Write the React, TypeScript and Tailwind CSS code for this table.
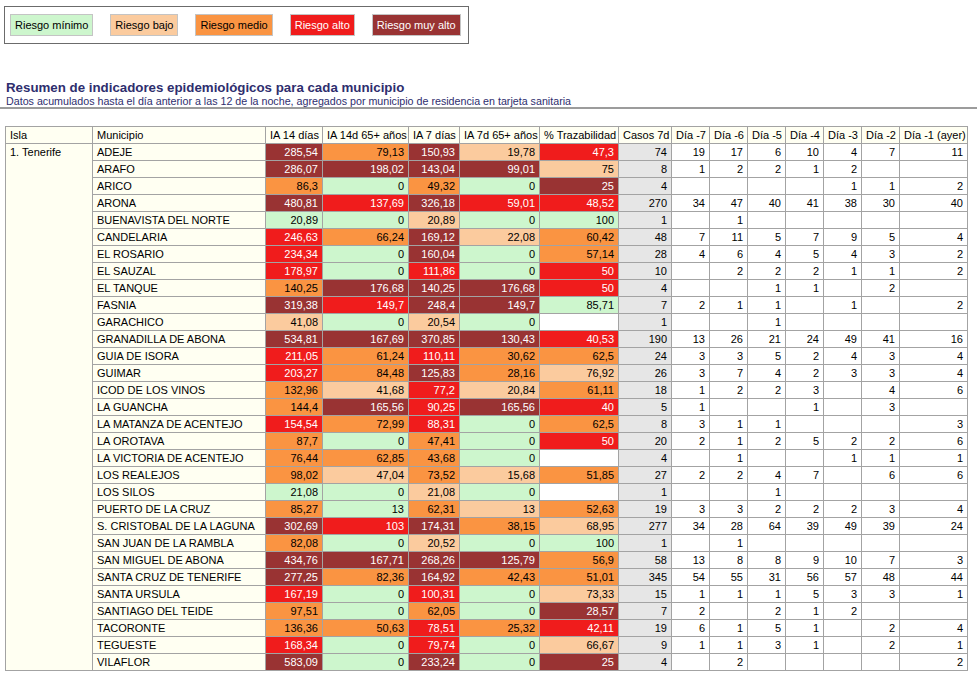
type Lvl = "M" | "A" | "Me" | "B" | "m" | "W";

type Row = {
  name: string;
  vals: [string, Lvl][];
  casos: string;
  days: string[];
};

const lvlClass: Record<Lvl, string> = {
  M: "bg-[#993333] text-white",
  A: "bg-[#f01c1c] text-white",
  Me: "bg-[#fa9442] text-black",
  B: "bg-[#fbcb9e] text-black",
  m: "bg-[#cdf6cd] text-black",
  W: "bg-white text-black",
};

const r = (
  name: string,
  v: [string, Lvl, string, Lvl, string, Lvl, string, Lvl, string, Lvl],
  casos: string,
  days: string[]
): Row => ({
  name,
  vals: [
    [v[0], v[1]],
    [v[2], v[3]],
    [v[4], v[5]],
    [v[6], v[7]],
    [v[8], v[9]],
  ],
  casos,
  days,
});

const rows: Row[] = [
  r("ADEJE", ["285,54", "M", "79,13", "Me", "150,93", "M", "19,78", "B", "47,3", "A"], "74", ["19", "17", "6", "10", "4", "7", "11"]),
  r("ARAFO", ["286,07", "M", "198,02", "M", "143,04", "M", "99,01", "M", "75", "B"], "8", ["1", "2", "2", "1", "2", "", ""]),
  r("ARICO", ["86,3", "Me", "0", "m", "49,32", "Me", "0", "m", "25", "M"], "4", ["", "", "", "", "1", "1", "2"]),
  r("ARONA", ["480,81", "M", "137,69", "A", "326,18", "M", "59,01", "A", "48,52", "A"], "270", ["34", "47", "40", "41", "38", "30", "40"]),
  r("BUENAVISTA DEL NORTE", ["20,89", "m", "0", "m", "20,89", "B", "0", "m", "100", "m"], "1", ["", "1", "", "", "", "", ""]),
  r("CANDELARIA", ["246,63", "A", "66,24", "Me", "169,12", "M", "22,08", "B", "60,42", "Me"], "48", ["7", "11", "5", "7", "9", "5", "4"]),
  r("EL ROSARIO", ["234,34", "A", "0", "m", "160,04", "M", "0", "m", "57,14", "Me"], "28", ["4", "6", "4", "5", "4", "3", "2"]),
  r("EL SAUZAL", ["178,97", "A", "0", "m", "111,86", "A", "0", "m", "50", "A"], "10", ["", "2", "2", "2", "1", "1", "2"]),
  r("EL TANQUE", ["140,25", "Me", "176,68", "M", "140,25", "M", "176,68", "M", "50", "A"], "4", ["", "", "1", "1", "", "2", ""]),
  r("FASNIA", ["319,38", "M", "149,7", "A", "248,4", "M", "149,7", "M", "85,71", "m"], "7", ["2", "1", "1", "", "1", "", "2"]),
  r("GARACHICO", ["41,08", "B", "0", "m", "20,54", "B", "0", "m", "", "W"], "1", ["", "", "1", "", "", "", ""]),
  r("GRANADILLA DE ABONA", ["534,81", "M", "167,69", "M", "370,85", "M", "130,43", "M", "40,53", "A"], "190", ["13", "26", "21", "24", "49", "41", "16"]),
  r("GUIA DE ISORA", ["211,05", "A", "61,24", "Me", "110,11", "A", "30,62", "Me", "62,5", "Me"], "24", ["3", "3", "5", "2", "4", "3", "4"]),
  r("GUIMAR", ["203,27", "A", "84,48", "Me", "125,83", "M", "28,16", "Me", "76,92", "B"], "26", ["3", "7", "4", "2", "3", "3", "4"]),
  r("ICOD DE LOS VINOS", ["132,96", "Me", "41,68", "B", "77,2", "A", "20,84", "B", "61,11", "Me"], "18", ["1", "2", "2", "3", "", "4", "6"]),
  r("LA GUANCHA", ["144,4", "Me", "165,56", "M", "90,25", "A", "165,56", "M", "40", "A"], "5", ["1", "", "", "1", "", "3", ""]),
  r("LA MATANZA DE ACENTEJO", ["154,54", "A", "72,99", "Me", "88,31", "A", "0", "m", "62,5", "Me"], "8", ["3", "1", "1", "", "", "", "3"]),
  r("LA OROTAVA", ["87,7", "Me", "0", "m", "47,41", "Me", "0", "m", "50", "A"], "20", ["2", "1", "2", "5", "2", "2", "6"]),
  r("LA VICTORIA DE ACENTEJO", ["76,44", "Me", "62,85", "Me", "43,68", "Me", "0", "m", "", "W"], "4", ["", "1", "", "", "1", "1", "1"]),
  r("LOS REALEJOS", ["98,02", "Me", "47,04", "B", "73,52", "Me", "15,68", "B", "51,85", "Me"], "27", ["2", "2", "4", "7", "", "6", "6"]),
  r("LOS SILOS", ["21,08", "m", "0", "m", "21,08", "B", "0", "m", "", "W"], "1", ["", "", "1", "", "", "", ""]),
  r("PUERTO DE LA CRUZ", ["85,27", "Me", "13", "m", "62,31", "Me", "13", "B", "52,63", "Me"], "19", ["3", "3", "2", "2", "2", "3", "4"]),
  r("S. CRISTOBAL DE LA LAGUNA", ["302,69", "M", "103", "A", "174,31", "M", "38,15", "Me", "68,95", "B"], "277", ["34", "28", "64", "39", "49", "39", "24"]),
  r("SAN JUAN DE LA RAMBLA", ["82,08", "Me", "0", "m", "20,52", "B", "0", "m", "100", "m"], "1", ["", "1", "", "", "", "", ""]),
  r("SAN MIGUEL DE ABONA", ["434,76", "M", "167,71", "M", "268,26", "M", "125,79", "M", "56,9", "Me"], "58", ["13", "8", "8", "9", "10", "7", "3"]),
  r("SANTA CRUZ DE TENERIFE", ["277,25", "M", "82,36", "Me", "164,92", "M", "42,43", "Me", "51,01", "Me"], "345", ["54", "55", "31", "56", "57", "48", "44"]),
  r("SANTA URSULA", ["167,19", "A", "0", "m", "100,31", "A", "0", "m", "73,33", "B"], "15", ["1", "1", "1", "5", "3", "3", "1"]),
  r("SANTIAGO DEL TEIDE", ["97,51", "Me", "0", "m", "62,05", "Me", "0", "m", "28,57", "M"], "7", ["2", "", "2", "1", "2", "", ""]),
  r("TACORONTE", ["136,36", "Me", "50,63", "Me", "78,51", "A", "25,32", "Me", "42,11", "A"], "19", ["6", "1", "5", "1", "", "2", "4"]),
  r("TEGUESTE", ["168,34", "A", "0", "m", "79,74", "A", "0", "m", "66,67", "B"], "9", ["1", "1", "3", "1", "", "2", "1"]),
  r("VILAFLOR", ["583,09", "M", "0", "m", "233,24", "M", "0", "m", "25", "M"], "4", ["", "2", "", "", "", "", "2"]),
];

const headers = [
  "Isla",
  "Municipio",
  "IA 14 días",
  "IA 14d 65+ años",
  "IA 7 días",
  "IA 7d 65+ años",
  "% Trazabilidad",
  "Casos 7d",
  "Día -7",
  "Día -6",
  "Día -5",
  "Día -4",
  "Día -3",
  "Día -2",
  "Día -1 (ayer)",
];

const widths = [87, 173, 57, 86, 51, 80, 79, 53, 38, 38, 38, 38, 38, 38, 68];

const legend: [string, string][] = [
  ["Riesgo mínimo", "bg-[#cdf6cd] text-black"],
  ["Riesgo bajo", "bg-[#fbcb9e] text-black"],
  ["Riesgo medio", "bg-[#fa9442] text-black"],
  ["Riesgo alto", "bg-[#f01c1c] text-white"],
  ["Riesgo muy alto", "bg-[#993333] text-white"],
];

const cell = "border border-[#a3a3a3] px-[4px] py-0 leading-[16px] whitespace-nowrap";

export default function App() {
  return (
    <div className="min-h-screen bg-white text-black font-['Liberation_Sans',Arial,sans-serif] text-[11px] pt-[6px]">
      {/* leyenda */}
      <div className="ml-[4px] w-[465px] h-[38px] border border-[#6b6b6b] flex items-center gap-[17px] pl-[5px]">
        {legend.map(([label, cls]) => (
          <div
            key={label}
            className={`flex-none h-[22px] px-[4px] flex items-center whitespace-nowrap border border-[#c4c4c4] ${cls}`}
          >
            {label}
          </div>
        ))}
      </div>

      <div className="mt-[36px] border-b-2 border-[#9c9c9c] pl-[6px] text-[#2e2e6e]">
        <h1 className="text-[13.3px] font-bold leading-[15px]">
          Resumen de indicadores epidemiológicos para cada municipio
        </h1>
        <p className="text-[10.7px] leading-[12px]">
          Datos acumulados hasta el día anterior a las 12 de la noche, agregados por municipio de
          residencia en tarjeta sanitaria
        </p>
      </div>

      <table className="mt-[17px] ml-[5px] w-[962px] table-fixed border-collapse bg-[#fffff2]">
        <colgroup>
          {widths.map((w, i) => (
            <col key={i} style={{ width: w }} />
          ))}
        </colgroup>
        <thead>
          <tr>
            {headers.map((h) => (
              <th key={h} className={`${cell} text-left font-normal`}>
                {h}
              </th>
            ))}
          </tr>
        </thead>
        <tbody>
          {rows.map((row, i) => (
            <tr key={row.name}>
              {i === 0 && (
                <td rowSpan={rows.length} className={`${cell} align-top`}>
                  1. Tenerife
                </td>
              )}
              <td className={cell}>{row.name}</td>
              {row.vals.map(([v, l], j) => (
                <td key={j} className={`${cell} text-right ${lvlClass[l]}`}>
                  {v}
                </td>
              ))}
              <td className={`${cell} text-right bg-[#e6e6e6]`}>{row.casos}</td>
              {row.days.map((d, j) => (
                <td key={j} className={`${cell} text-right bg-white`}>
                  {d}
                </td>
              ))}
            </tr>
          ))}
        </tbody>
      </table>
    </div>
  );
}
